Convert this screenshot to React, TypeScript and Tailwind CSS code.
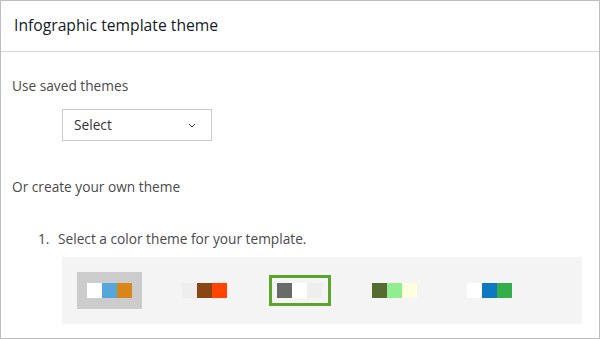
import React from 'react';

type Theme = { colors: string[]; state?: 'active' | 'selected' };

const themes: Theme[] = [
  { colors: ['#ffffff', '#55a6da', '#d8861b'], state: 'active' },
  { colors: ['#eeeeee', '#8b4513', '#ff4500'] },
  { colors: ['#696969', '#ffffff', '#eeeeee'], state: 'selected' },
  { colors: ['#556b2f', '#90ee90', '#ffffe0'] },
  { colors: ['#ffffff', '#0b78c0', '#34ad4a'] },
];

const Swatches: React.FC<{ colors: string[] }> = ({ colors }) => (
  <div className="flex">
    {colors.map((c, i) => (
      <span key={i} className="w-[15px] h-[15px]" style={{ backgroundColor: c }} />
    ))}
  </div>
);

const ThemeItem: React.FC<{ theme: Theme }> = ({ theme }) => {
  if (theme.state === 'active') {
    return (
      <div className="w-[65px] h-[37px] bg-[#cccccc] flex items-center justify-center">
        <Swatches colors={theme.colors} />
      </div>
    );
  }
  return (
    <div className="w-[65px] h-[37px] flex items-center justify-center">
      {theme.state === 'selected' ? (
        <div className="w-[62px] h-[31px] border-[3px] border-[#5ea42c] flex items-center justify-center">
          <Swatches colors={theme.colors} />
        </div>
      ) : (
        <Swatches colors={theme.colors} />
      )}
    </div>
  );
};

export default function App() {
  return (
    <div
      className="w-[600px] h-[339px] bg-white border border-[#bdbdbd] overflow-hidden"
      style={{ fontFamily: '"Open Sans", sans-serif' }}
    >
      <div className="h-[51px] border-b border-[#d4d4d4] px-[13px] flex items-center">
        <h2 className="text-[15.7px] text-[#151b26]">Infographic template theme</h2>
      </div>

      <div className="px-[11px]">
        <div className="mt-[24px] h-[20px] leading-[20px] text-[13.7px] text-[#4a4a4a]">Use saved themes</div>

        <button className="mt-[13px] ml-[50px] w-[150px] h-[32px] border border-[#cacaca] flex items-center justify-between pl-[11px] pr-[15px] text-[13.7px] text-[#333333]">
          <span>Select</span>
          <svg width="8" height="5" viewBox="0 0 8 5" fill="none">
            <path d="M1 1l3 3 3-3" stroke="#333333" strokeWidth="1" />
          </svg>
        </button>

        <div className="mt-[36px] h-[20px] leading-[20px] text-[13.7px] text-[#4a4a4a]">Or create your own theme</div>

        <div className="mt-[32px] h-[20px] leading-[20px] text-[13.7px] text-[#4a4a4a] flex">
          <span className="ml-[26px] w-[20px]">1.</span>
          <span>Select a color theme for your template.</span>
        </div>

        <div className="mt-[8px] ml-[50px] w-[520px] h-[67px] bg-[#f4f4f4] px-[15px] flex items-center gap-[30px]">
          {themes.map((t, i) => (
            <ThemeItem key={i} theme={t} />
          ))}
        </div>
      </div>
    </div>
  );
}
